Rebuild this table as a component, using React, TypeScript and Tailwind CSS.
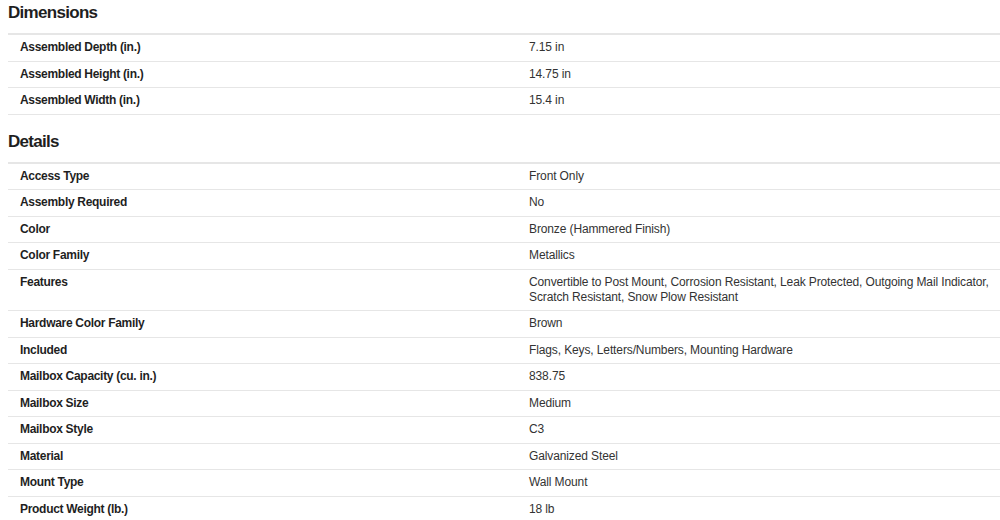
import React from "react";

const dimensions: [string, string][] = [
  ["Assembled Depth (in.)", "7.15 in"],
  ["Assembled Height (in.)", "14.75 in"],
  ["Assembled Width (in.)", "15.4 in"],
];

const details: [string, string][] = [
  ["Access Type", "Front Only"],
  ["Assembly Required", "No"],
  ["Color", "Bronze (Hammered Finish)"],
  ["Color Family", "Metallics"],
  [
    "Features",
    "Convertible to Post Mount, Corrosion Resistant, Leak Protected, Outgoing Mail Indicator, Scratch Resistant, Snow Plow Resistant",
  ],
  ["Hardware Color Family", "Brown"],
  ["Included", "Flags, Keys, Letters/Numbers, Mounting Hardware"],
  ["Mailbox Capacity (cu. in.)", "838.75"],
  ["Mailbox Size", "Medium"],
  ["Mailbox Style", "C3"],
  ["Material", "Galvanized Steel"],
  ["Mount Type", "Wall Mount"],
  ["Product Weight (lb.)", "18 lb"],
];

function Section({ title, rows, first }: { title: string; rows: [string, string][]; first?: boolean }) {
  return (
    <section className={first ? "pt-[1px]" : "mt-[15px]"}>
      <h2 className="text-[17px] leading-[24px] font-bold tracking-[-0.7px] text-[#1f1f1f] px-[8px]">{title}</h2>
      <div className="mt-[8px] ml-[8px] border-t-2 border-[#e6e6e6]">
        {rows.map(([k, v]) => (
          <div key={k} className="grid grid-cols-[509px_1fr] border-b border-[#e6e6e6]">
            <div className="pl-[12px] py-[5.25px] text-[12px] leading-[15px] font-bold tracking-[-0.3px] text-[#1f1f1f]">{k}</div>
            <div className="pl-[12px] py-[5.25px] text-[12px] leading-[15px] tracking-[-0.12px] text-[#333333]">{v}</div>
          </div>
        ))}
      </div>
    </section>
  );
}

export default function App() {
  return (
    <div className="w-[1000px] h-[520px] overflow-hidden bg-white" style={{ fontFamily: '"Liberation Sans", Arial, sans-serif' }}>
      <Section title="Dimensions" rows={dimensions} first />
      <Section title="Details" rows={details} />
    </div>
  );
}
